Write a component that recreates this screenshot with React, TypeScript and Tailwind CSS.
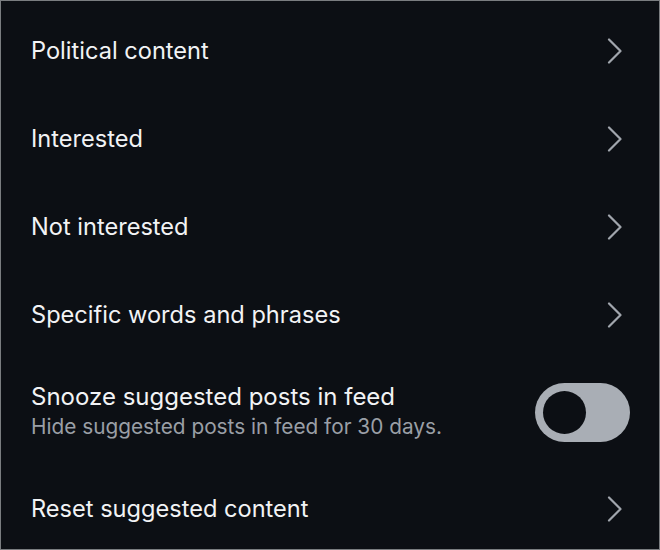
import React from "react";

const Chevron: React.FC = () => (
  <svg width="16" height="26" viewBox="0 0 16 26" fill="none" className="shrink-0">
    <path d="M2 1.5 L13.5 13 L2 24.5" stroke="#a1a6ad" strokeWidth="2.2" strokeLinecap="round" strokeLinejoin="round" />
  </svg>
);

const LinkRow: React.FC<{ label: string; h?: string }> = ({ label, h = "h-[88px]" }) => (
  <div className={`flex items-center justify-between pl-[30px] pr-[36px] ${h}`}>
    <span className="text-[23.6px] text-[#f2f3f5]">{label}</span>
    <Chevron />
  </div>
);

const App: React.FC = () => {
  return (
    <div
      className="h-[550px] w-[660px] overflow-hidden border border-[#7a7d80] bg-[#0c0f14] pt-[6px]"
      style={{ fontFamily: "Inter, 'Noto Sans', sans-serif" }}
    >
      <LinkRow label="Political content" />
      <LinkRow label="Interested" />
      <LinkRow label="Not interested" />
      <LinkRow label="Specific words and phrases" />
      <div className="flex h-[106px] items-center justify-between pl-[30px] pr-[29px]">
        <div className="flex flex-col">
          <span className="text-[24px] leading-[30px] text-[#f2f3f5]">Snooze suggested posts in feed</span>
          <span className="text-[20.8px] leading-[30px] text-[#9a9fa6]">Hide suggested posts in feed for 30 days.</span>
        </div>
        <div className="flex h-[59px] w-[95px] items-center rounded-full bg-[#a9aeb5] pl-[8px]">
          <div className="h-[43px] w-[43px] rounded-full bg-[#0c0f14]" />
        </div>
      </div>
      <LinkRow label="Reset suggested content" />
    </div>
  );
};

export default App;
